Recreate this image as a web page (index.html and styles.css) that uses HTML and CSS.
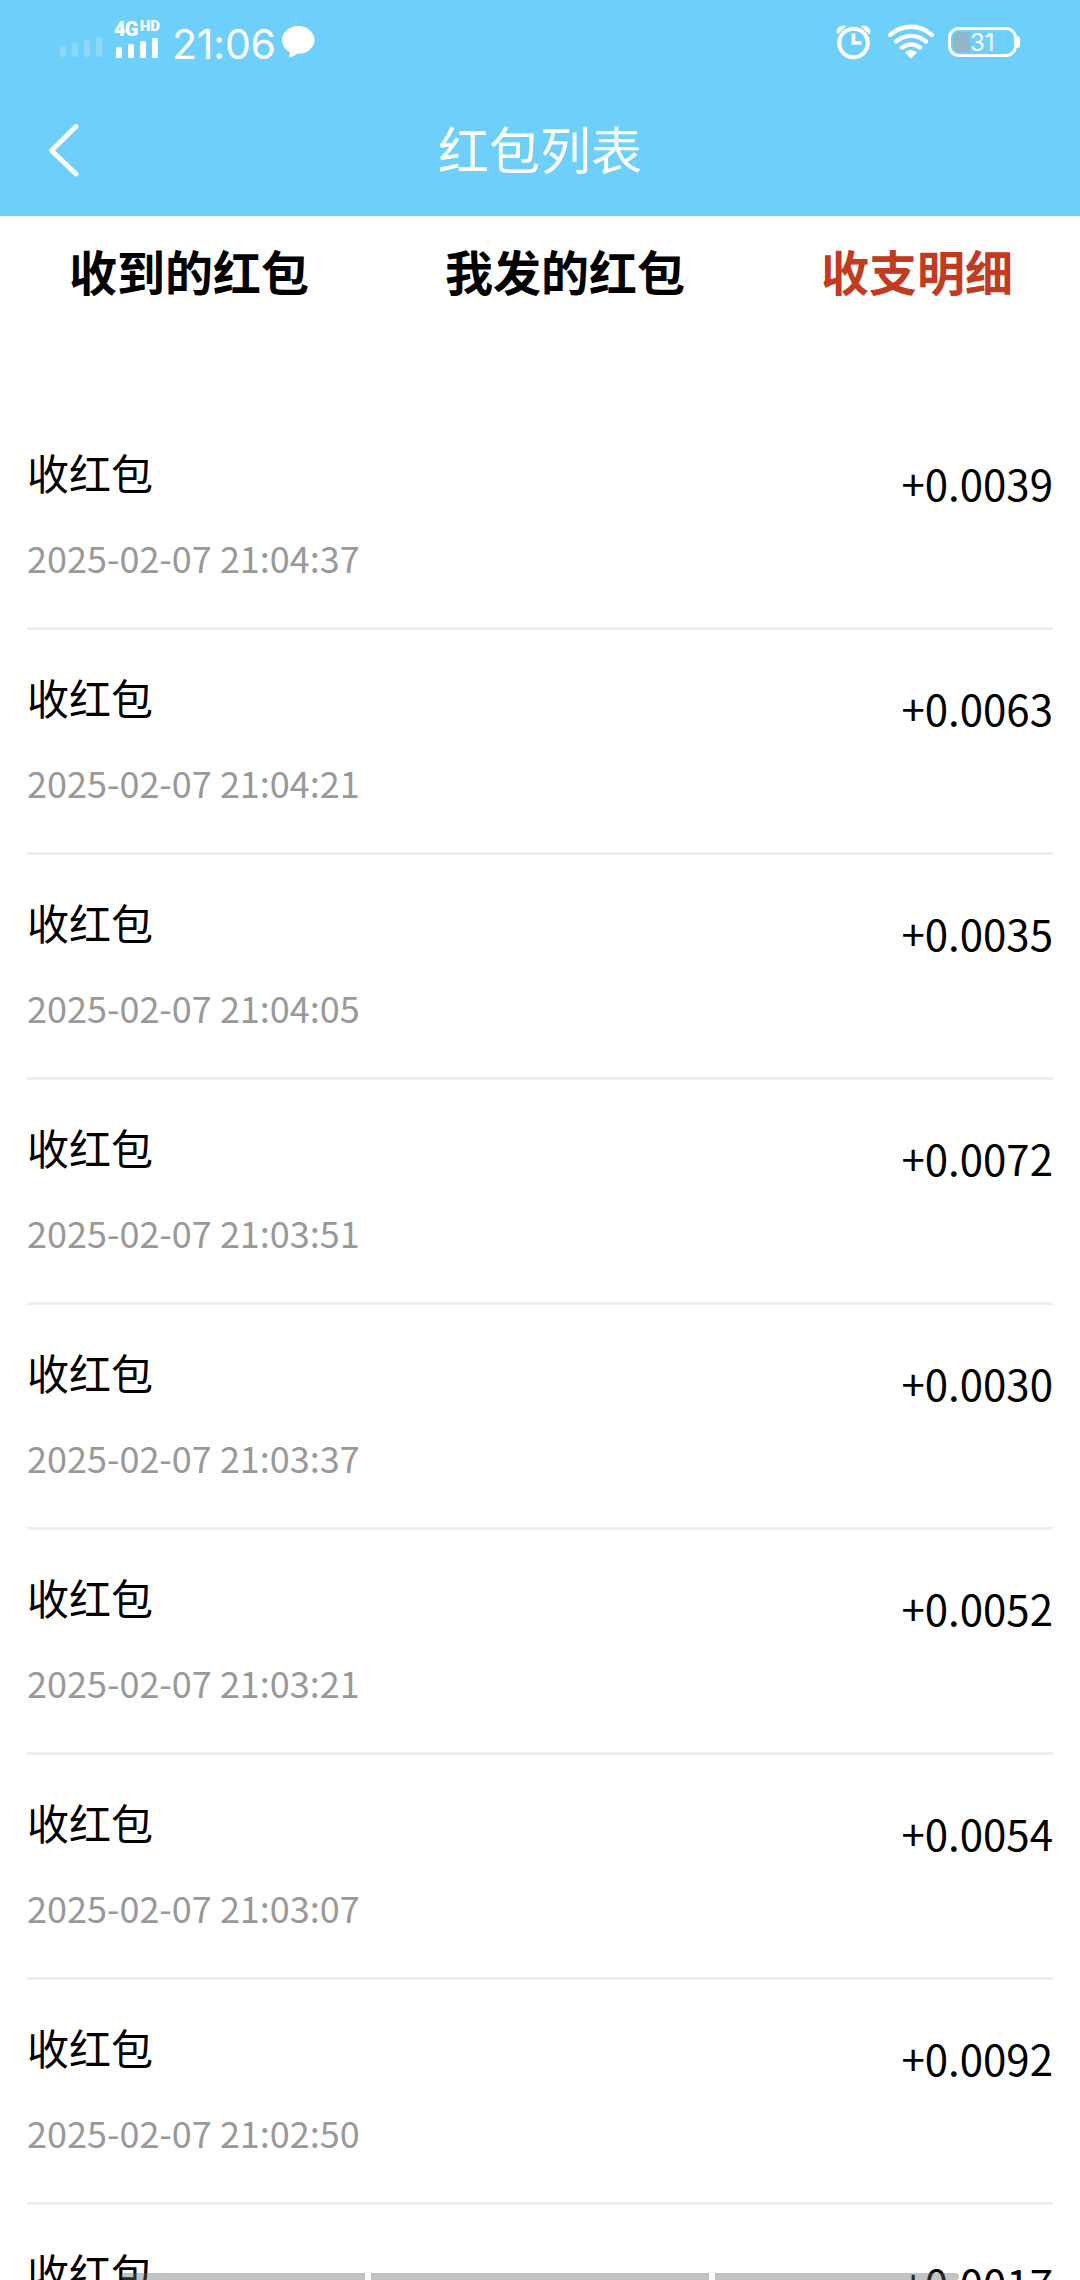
FILE: index.html
```html
<!DOCTYPE html>
<html lang="zh-CN">
<head>
<meta charset="utf-8">
<title>红包列表</title>
<link rel="stylesheet" href="styles.css">
</head>
<body>
<div class="screen">
  <header class="header">
    <div class="status">
      <div class="status-left">
        <svg class="sim-off" width="46" height="22" viewBox="0 0 46 22" fill="#fff"><rect x="2" y="10" width="6" height="11" rx="2"/><rect x="14" y="7" width="6" height="14" rx="2"/><rect x="26" y="4" width="6" height="17" rx="2"/><rect x="38" y="1" width="6" height="20" rx="2"/></svg>
        <div class="network">
          <div class="network-type">4G<span class="hd">HD</span></div>
          <svg width="44" height="20" viewBox="0 0 44 20" fill="#fff"><rect x="0" y="9" width="6" height="11" rx="1.5"/><rect x="12" y="6" width="6" height="14" rx="1.5"/><rect x="24" y="3" width="6" height="17" rx="1.5"/><rect x="36" y="0" width="6" height="20" rx="1.5"/></svg>
        </div>
        <span class="clock">21:06</span>
        <svg class="bubble" width="34" height="34" viewBox="0 0 34 34" fill="#fff"><path d="M17 1C8 1 1 7.500 1 15c0 5 3 9.500 7.500 12 1 2-.5 4-.5 5.300 3 .4 6-1.800 8-3.500h1C26 29 33.500 23 33.500 15S26 1 17 1z"/></svg>
      </div>
      <div class="status-right">
        <svg width="36" height="36" viewBox="0 0 36 36" fill="none" stroke="#fff"><circle cx="17.500" cy="19" r="14.300" stroke-width="4"/><path d="M17.500 9.500v9.500h8" stroke-width="3.600"/><path d="M.8 10C-.5 4 5 0 10.500 2L2 10zM34.200 10C35.500 4 30 0 24.500 2l8.500 8z" fill="#fff" stroke="none"/></svg>
        <svg class="wifi" width="48" height="36" viewBox="0 0 48 36" fill="none" stroke="#fff" stroke-width="4.300" stroke-linecap="round"><path d="M3 11C15 0 33 0 45 11M9 17.500c9-7.500 21-7.500 30 0M15 23.500c5.500-4 12.500-4 18 0"/><path d="M24 33.500l-5-5c3-2.200 7-2.200 10 0z" fill="#fff" stroke-width="1.500" stroke-linejoin="round"/></svg>
        <div class="battery"><div class="battery-body"><span class="battery-level"></span><span class="battery-text">31</span></div><span class="battery-tip"></span></div>
      </div>
    </div>
    <div class="navbar">
      <svg class="back" width="32" height="54" viewBox="0 0 32 54" fill="none" stroke="#fff" stroke-width="4.800" stroke-linecap="round" stroke-linejoin="round"><path d="M28 3.500L3.500 27.500l24.500 23.500"/></svg>
      <h1 class="title">红包列表</h1>
    </div>
  </header>
  <nav class="tabs"><a class="tab">收到的红包</a><a class="tab">我发的红包</a><a class="tab tab-active">收支明细</a></nav>
  <main class="list">
    <div class="item"><div><div class="name">收红包</div><div class="time">2025-02-07 21:04:37</div></div><div class="amount">+0.0039</div></div>
    <div class="item"><div><div class="name">收红包</div><div class="time">2025-02-07 21:04:21</div></div><div class="amount">+0.0063</div></div>
    <div class="item"><div><div class="name">收红包</div><div class="time">2025-02-07 21:04:05</div></div><div class="amount">+0.0035</div></div>
    <div class="item"><div><div class="name">收红包</div><div class="time">2025-02-07 21:03:51</div></div><div class="amount">+0.0072</div></div>
    <div class="item"><div><div class="name">收红包</div><div class="time">2025-02-07 21:03:37</div></div><div class="amount">+0.0030</div></div>
    <div class="item"><div><div class="name">收红包</div><div class="time">2025-02-07 21:03:21</div></div><div class="amount">+0.0052</div></div>
    <div class="item"><div><div class="name">收红包</div><div class="time">2025-02-07 21:03:07</div></div><div class="amount">+0.0054</div></div>
    <div class="item"><div><div class="name">收红包</div><div class="time">2025-02-07 21:02:50</div></div><div class="amount">+0.0092</div></div>
    <div class="item"><div><div class="name">收红包</div></div><div class="amount">+0.0017</div></div>
  </main>
  <div class="gesture"><span></span><span></span><span></span></div>
</div>
</body>
</html>
```
FILE: styles.css
```css
* { box-sizing: border-box; }
body { margin: 0; background: #fff; font-family: "Noto Sans CJK SC", sans-serif; color: #000; }
svg { display: block; flex: none; }
.screen { position: relative; width: 1080px; height: 2280px; overflow: hidden; }
.header { height: 216px; background: #6fcffb; color: #fff; }
.status { height: 84px; display: flex; justify-content: space-between; padding: 0 60px 0 58px; }
.status-left, .status-right { display: flex; align-items: flex-start; }
.sim-off { margin-top: 36px; opacity: .2; }
.network { margin: 19px 0 0 12px; width: 48px; }
.network-type { height: 18px; font: 900 20px/21px Roboto, sans-serif; display: flex; margin-left: -2px; letter-spacing: -.8px; }
.network svg { margin-top: 1px; }
.hd { font-size: 15px; line-height: 15px; font-weight: 900; margin-left: 2px; letter-spacing: .2px; }
.clock { width: 104px; margin: 20px 0 0 8px; font: 400 41px/48px Inter, sans-serif; letter-spacing: -.2px; white-space: nowrap; }
.bubble { margin: 25px 0 0 5px; }
.status-right > svg { margin-top: 24px; }
.status-right > .wifi { margin-left: 15px; }
.battery { display: flex; align-items: center; margin: 27px 0 0 13px; }
.battery-body { width: 69px; height: 30px; border: 3px solid #fff; border-radius: 11px; display: flex; padding: 2px; }
.battery-level { width: 17px; height: 20px; background: #92b6c8; border-radius: 6px 0 0 6px; }
.battery-text { font: 400 24px/22px Inter, sans-serif; }
.battery-tip { width: 3px; height: 12px; background: #fff; border-radius: 0 3px 3px 0; }
.navbar { height: 132px; display: flex; align-items: flex-start; padding: 0 48px; }
.back { margin-top: 39px; }
.title { flex: 1; margin: 26px 32px 0 0; text-align: center; font-size: 51px; line-height: 76px; font-weight: 400; }
.tabs { height: 189px; display: flex; justify-content: space-between; padding: 19px 67px 0 69px; font-size: 48px; line-height: 70px; font-weight: 700; }
.tab-active { color: #c23a20; }
.list { padding: 0 27px; }
.item { height: 225px; border-bottom: 3px solid #eee; display: flex; justify-content: space-between; }
.name { margin-top: 37px; font-size: 42px; line-height: 60px; }
.time { margin-top: 28px; font-size: 36px; line-height: 54px; color: #999; }
.amount { margin-top: 47px; font-size: 42px; line-height: 62px; }
.gesture { position: absolute; left: 121px; bottom: 0; width: 838px; height: 7px; display: flex; gap: 6px; }
.gesture span { background: rgba(105,105,105,.4); }
.gesture span:nth-child(1) { width: 244px; border-radius: 4px 0 0 4px; }
.gesture span:nth-child(2) { width: 338px; }
.gesture span:nth-child(3) { width: 244px; border-radius: 0 4px 4px 0; }
```
